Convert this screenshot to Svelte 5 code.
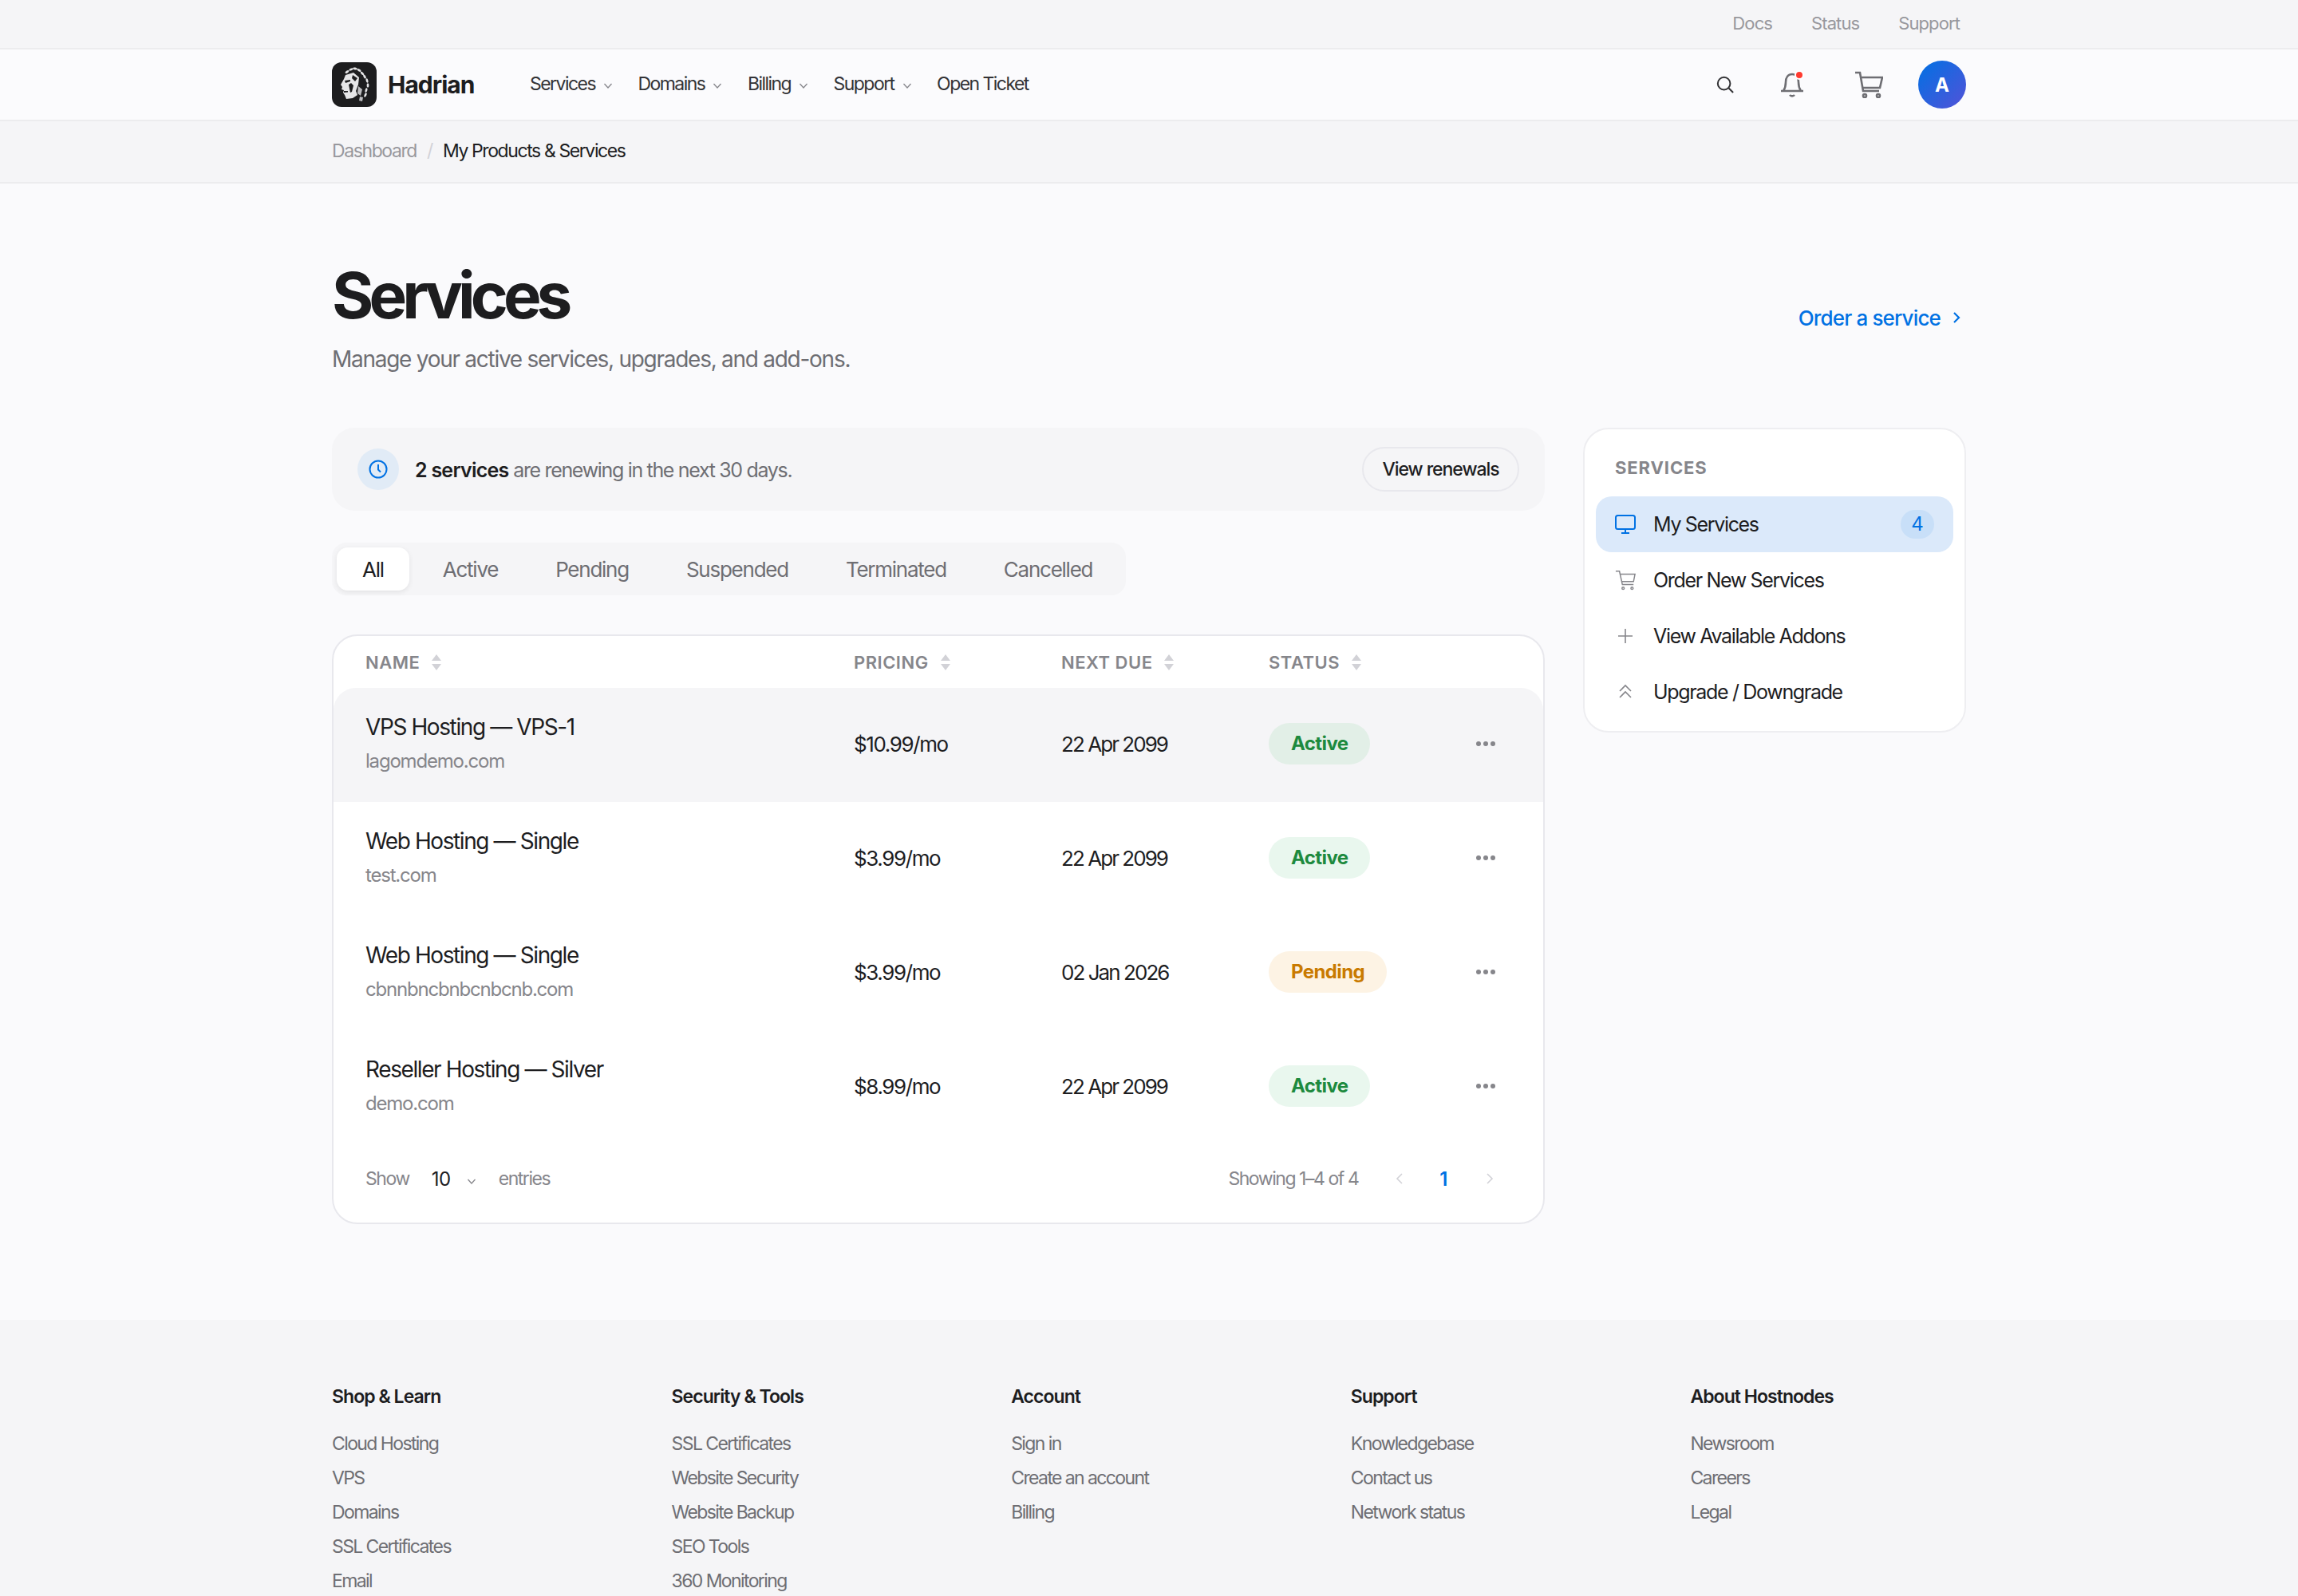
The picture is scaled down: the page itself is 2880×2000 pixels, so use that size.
<script>
	const navItems = [
		{ label: 'Services', caret: true },
		{ label: 'Domains', caret: true },
		{ label: 'Billing', caret: true },
		{ label: 'Support', caret: true },
		{ label: 'Open Ticket', caret: false }
	];
	const tabs = ['All', 'Active', 'Pending', 'Suspended', 'Terminated', 'Cancelled'];
	const columns = ['Name', 'Pricing', 'Next Due', 'Status'];
	const services = [
		{ name: 'VPS Hosting — VPS-1', domain: 'lagomdemo.com', price: '$10.99/mo', due: '22 Apr 2099', status: 'Active' },
		{ name: 'Web Hosting — Single', domain: 'test.com', price: '$3.99/mo', due: '22 Apr 2099', status: 'Active' },
		{ name: 'Web Hosting — Single', domain: 'cbnnbncbnbcnbcnb.com', price: '$3.99/mo', due: '02 Jan 2026', status: 'Pending' },
		{ name: 'Reseller Hosting — Silver', domain: 'demo.com', price: '$8.99/mo', due: '22 Apr 2099', status: 'Active' }
	];
	const footer = [
		{ title: 'Shop & Learn', links: ['Cloud Hosting', 'VPS', 'Domains', 'SSL Certificates', 'Email'] },
		{ title: 'Security & Tools', links: ['SSL Certificates', 'Website Security', 'Website Backup', 'SEO Tools', '360 Monitoring'] },
		{ title: 'Account', links: ['Sign in', 'Create an account', 'Billing'] },
		{ title: 'Support', links: ['Knowledgebase', 'Contact us', 'Network status'] },
		{ title: 'About Hostnodes', links: ['Newsroom', 'Careers', 'Legal'] }
	];
	// laurel wreath leaves on the logo: x, y, angle
	const leaves = [
		[19, 12, -35], [24, 9, -20], [29, 8, 10], [34, 10, 30], [38, 14, 45], [41, 18, 60],
		[44, 23, 75], [45, 29, 90], [43, 35, 105], [42, 41, 115]
	];
</script>

<div class="page">
	<div class="topbar">
		<div class="wrap toplinks">
			<span>Docs</span>
			<span>Status</span>
			<span>Support</span>
		</div>
	</div>

	<header class="navbar">
		<div class="wrap navrow">
			<div class="brand">
				<svg class="logo" viewBox="0 0 56 56">
					<rect width="56" height="56" rx="12" fill="#1d1d1f" />
					<!-- bust in profile, looking left -->
					<path d="M17 16l10-3 7 6-1 9-3 8 2 5-6 4-8 1-2-5-2-3 1-3-3-1 1-3-2-3 4-7z" fill="#e6e6e8" />
					<path d="M16 23l7-1 0 2-6 2zM21 28l3-2 3 3-2 8-2 1zM15 36l5 0 0 1.500-5 .5zM26 16l6 4-3 4-4-4z" fill="#1d1d1f" />
					<path d="M33 30l5 4-2 8-4-3zM35 43l4 1-1 5-4-1z" fill="#bdbdc0" />
					{#each leaves as [x, y, a]}
						<ellipse cx={x} cy={y} rx="2.8" ry="1.4" transform="rotate({a} {x} {y})" fill="#e6e6e8" />
					{/each}
				</svg>
				<span class="brandname">Hadrian</span>
			</div>
			<nav class="mainnav">
				{#each navItems as item}
					<span class="navitem">
						{item.label}
						{#if item.caret}
							<svg class="caret" viewBox="0 0 12 12"><path d="M1.500 4l4.500 5 4.500-5" /></svg>
						{/if}
					</span>
				{/each}
			</nav>
			<div class="navicons">
				<svg class="icon-search" viewBox="0 0 24 24"><circle cx="10.5" cy="10.5" r="8.5" /><path d="M17 17l6 6" /></svg>
				<span class="bell">
					<svg viewBox="0 0 32 34"><path d="M2 25h28M5 25c2-3 3-6 3-11 0-6 3-10 8-10s8 4 8 10c0 5 1 8 3 11M13 30c1.500 1.800 4.500 1.800 6 0" /></svg>
					<i class="dot"></i>
				</span>
				<svg class="icon-cart" viewBox="0 0 36 34">
					<path d="M1 2h6l4 23h20M8 8h27l-3 13H10" />
					<circle cx="13" cy="31" r="2" />
					<circle cx="30" cy="31" r="2" />
				</svg>
				<span class="avatar">A</span>
			</div>
		</div>
	</header>

	<div class="crumbs">
		<div class="wrap crumbrow">
			<span class="muted">Dashboard</span>
			<span class="slash">/</span>
			<span class="current">My Products &amp; Services</span>
		</div>
	</div>

	<main class="wrap">
		<div class="pagehead">
			<div>
				<h1>Services</h1>
				<p>Manage your active services, upgrades, and add-ons.</p>
			</div>
			<span class="order">
				Order a service
				<svg viewBox="0 0 12 16"><path d="M3 2l6 6-6 6" /></svg>
			</span>
		</div>

		<div class="columns">
			<section class="content">
				<div class="notice">
					<span class="clock">
						<svg viewBox="0 0 24 24"><circle cx="12" cy="12" r="10.5" /><path d="M12 6v6.500l3 3" /></svg>
					</span>
					<span class="noticetext"><strong>2 services</strong> are renewing in the next 30 days.</span>
					<span class="renew">View renewals</span>
				</div>

				<div class="tabs">
					{#each tabs as tab, i}
						<span class="tab" class:selected={i === 0}>{tab}</span>
					{/each}
				</div>

				<div class="tablecard">
					<div class="row head">
						{#each columns as col}
							<span class="th">
								{col}
								<svg viewBox="0 0 12 20"><path d="M6 0l6 8H0zM6 20l-6-8h12z" /></svg>
							</span>
						{/each}
					</div>
					{#each services as s, i}
						<div class="row item" class:hover={i === 0}>
							<div class="namecell">
								<span class="sname">{s.name}</span>
								<span class="sdomain">{s.domain}</span>
							</div>
							<span class="price">{s.price}</span>
							<span class="due">{s.due}</span>
							<span><span class="badge {s.status.toLowerCase()}">{s.status}</span></span>
							<span class="more"><i></i><i></i><i></i></span>
						</div>
					{/each}
					<div class="tablefoot">
						<div class="show">
							<span>Show</span>
							<span class="num">10</span>
							<svg class="caret" viewBox="0 0 12 12"><path d="M1.500 4l4.500 5 4.500-5" /></svg>
							<span class="entries">entries</span>
						</div>
						<div class="pager">
							<span class="showing">Showing 1–4 of 4</span>
							<svg class="arrow" viewBox="0 0 10 16"><path d="M8 2L2 8l6 6" /></svg>
							<span class="page1">1</span>
							<svg class="arrow" viewBox="0 0 10 16"><path d="M2 2l6 6-6 6" /></svg>
						</div>
					</div>
				</div>
			</section>

			<aside class="sidebar">
				<h4>SERVICES</h4>
				<div class="sideitem active">
					<svg class="blue" viewBox="0 0 26 24"><rect x="1" y="1" width="24" height="17" rx="2.5" /><path d="M13 18v4M8 23h10" /></svg>
					<span>My Services</span>
					<b>4</b>
				</div>
				<div class="sideitem">
					<svg viewBox="0 0 28 28"><path d="M1 2h5l4 18h15M7 6h20l-2 10H9" /><circle cx="11" cy="25" r="1.5" /><circle cx="23" cy="25" r="1.5" /></svg>
					<span>Order New Services</span>
				</div>
				<div class="sideitem">
					<svg viewBox="0 0 26 26"><path d="M13 4v18M4 13h18" /></svg>
					<span>View Available Addons</span>
				</div>
				<div class="sideitem">
					<svg viewBox="0 0 26 26"><path d="M6 12l7-7 7 7M6 20l7-7 7 7" /></svg>
					<span>Upgrade / Downgrade</span>
				</div>
			</aside>
		</div>
	</main>

	<footer class="sitefoot">
		<div class="wrap footgrid">
			{#each footer as col}
				<div class="footcol">
					<h5>{col.title}</h5>
					{#each col.links as link}
						<span>{link}</span>
					{/each}
				</div>
			{/each}
		</div>
	</footer>
</div>

<style>
	:global(body) {
		margin: 0;
		background: #fafafc;
		font-family: Inter, 'Liberation Sans', sans-serif;
		color: #1d1d1f;
	}
	svg {
		fill: none;
		stroke: currentColor;
		flex: none;
		display: block;
	}
	h1,
	h4,
	h5,
	p {
		margin: 0;
	}
	.page {
		height: 2000px;
		overflow: hidden;
	}
	.wrap {
		width: 2048px;
		margin: 0 auto;
	}

	.topbar {
		height: 60px;
		background: #f5f5f7;
		border-bottom: 2px solid #ececee;
	}
	.toplinks {
		height: 100%;
		display: flex;
		justify-content: flex-end;
		align-items: center;
		gap: 49px;
		padding: 0 8px 3px 0;
		box-sizing: border-box;
		font-size: 22px;
		letter-spacing: -0.9px;
		color: #98989d;
	}

	.navbar {
		height: 88px;
		background: #fbfbfd;
		border-bottom: 2px solid #ececee;
	}
	.navrow {
		height: 100%;
		display: flex;
		align-items: center;
	}
	.brand {
		display: flex;
		align-items: center;
		gap: 14px;
		width: 248px;
	}
	.logo {
		width: 56px;
		height: 56px;
		stroke: none;
	}
	.brandname {
		font-size: 30px;
		font-weight: 700;
		letter-spacing: -1px;
	}
	.mainnav {
		display: flex;
		gap: 31.5px;
		font-size: 23px;
		letter-spacing: -1.55px;
		color: #333336;
		padding-bottom: 3px;
	}
	.navitem {
		display: flex;
		align-items: center;
		gap: 10px;
	}
	.caret {
		width: 12px;
		height: 12px;
		stroke: #86868b;
		stroke-width: 1.3;
		margin-top: 5px;
	}
	.navicons {
		margin-left: auto;
		display: flex;
		align-items: center;
	}
	.icon-search {
		width: 22px;
		height: 22px;
		stroke: #333336;
		stroke-width: 2.2;
		margin-right: 57px;
	}
	.bell {
		position: relative;
		width: 32px;
		height: 34px;
		margin-right: 62px;
		color: #6e6e73;
	}
	.bell svg {
		stroke-width: 2.6;
	}
	.dot {
		position: absolute;
		top: -1px;
		right: 1px;
		width: 8px;
		height: 8px;
		border-radius: 50%;
		background: #ff3b30;
		border: 2px solid #fff;
	}
	.icon-cart {
		width: 36px;
		height: 34px;
		stroke: #6e6e73;
		stroke-width: 2.6;
		margin-right: 44px;
	}
	.avatar {
		width: 60px;
		height: 60px;
		border-radius: 50%;
		background: linear-gradient(135deg, #0071e3, #5352d8);
		color: #fff;
		font-size: 24px;
		font-weight: 700;
		display: flex;
		align-items: center;
		justify-content: center;
	}

	.crumbs {
		height: 76px;
		background: #f5f5f7;
		border-bottom: 2px solid #ececee;
	}
	.crumbrow {
		height: 100%;
		display: flex;
		align-items: center;
		gap: 13px;
		font-size: 23px;
		letter-spacing: -1.4px;
		padding-bottom: 2px;
		box-sizing: border-box;
	}
	.muted {
		color: #98989d;
	}
	.slash {
		color: #d2d2d7;
	}

	.pagehead {
		display: flex;
		justify-content: space-between;
		align-items: center;
		padding: 94px 0 66px;
		height: 306px;
		box-sizing: border-box;
	}
	h1 {
		font-size: 80px;
		font-weight: 700;
		letter-spacing: -5.95px;
		line-height: 92px;
	}
	.pagehead p {
		margin-top: 14px;
		font-size: 28px;
		letter-spacing: -1.27px;
		line-height: 40px;
		color: #6e6e73;
	}
	.order {
		display: flex;
		align-items: center;
		gap: 14px;
		color: #0071e3;
		font-size: 26px;
		font-weight: 500;
		letter-spacing: -0.85px;
		margin: 2px 6px 0 0;
	}
	.order svg {
		width: 12px;
		height: 16px;
		stroke-width: 2.2;
	}

	.columns {
		display: flex;
		gap: 48px;
		align-items: flex-start;
	}
	.content {
		width: 1520px;
	}
	.notice {
		height: 104px;
		border-radius: 28px;
		background: #f5f5f7;
		display: flex;
		align-items: center;
		padding: 0 32px;
		box-sizing: border-box;
	}
	.clock {
		width: 52px;
		height: 52px;
		border-radius: 50%;
		background: #e1ebf6;
		display: flex;
		align-items: center;
		justify-content: center;
		color: #0071e3;
	}
	.clock svg {
		width: 24px;
		height: 24px;
		stroke-width: 2;
	}
	.noticetext {
		margin: 2px 0 0 20px;
		font-size: 25px;
		letter-spacing: -1.33px;
		color: #6e6e73;
	}
	.noticetext strong {
		color: #1d1d1f;
		font-weight: 600;
		letter-spacing: -0.75px;
	}
	.renew {
		margin-left: auto;
		width: 197px;
		height: 56px;
		justify-content: center;
		border: 2px solid #e8e8ed;
		border-radius: 28px;
		display: flex;
		align-items: center;
		box-sizing: border-box;
		font-size: 23px;
		font-weight: 500;
		letter-spacing: -1.05px;
	}

	.tabs {
		display: inline-flex;
		margin-top: 40px;
		height: 66px;
		background: #f5f5f7;
		border-radius: 18px;
		padding: 6px;
		box-sizing: border-box;
	}
	.tab {
		display: flex;
		align-items: center;
		padding: 0 36px;
		font-size: 26px;
		letter-spacing: -1.25px;
		color: #6e6e73;
	}
	.tab.selected {
		background: #fff;
		border-radius: 14px;
		color: #1d1d1f;
		box-shadow: 0 2px 6px rgba(0, 0, 0, 0.08);
		padding: 0 32px;
		margin-right: 6px;
	}

	.tablecard {
		margin-top: 49px;
		background: #fff;
		border: 2px solid #e8e8ed;
		border-radius: 32px;
		overflow: hidden;
	}
	.row {
		display: grid;
		grid-template-columns: 612px 260px 260px 1fr 84px;
		padding-left: 40px;
		align-items: center;
	}
	.head {
		height: 65px;
		grid-template-columns: 612px 260px 260px 1fr;
	}
	.th {
		display: flex;
		align-items: center;
		gap: 15px;
		text-transform: uppercase;
		font-size: 22px;
		font-weight: 600;
		letter-spacing: 0.5px;
		color: #86868b;
	}
	.th svg {
		width: 12px;
		height: 20px;
		stroke: none;
		fill: #d2d2d7;
	}
	.item {
		height: 143px;
		padding-bottom: 3px;
		box-sizing: border-box;
		font-size: 26px;
	}
	.item.hover {
		background: #f5f5f7;
		border-radius: 28px 28px 0 0;
	}
	.namecell {
		display: flex;
		flex-direction: column;
		gap: 8px;
	}
	.sname {
		font-size: 28px;
		letter-spacing: -1.4px;
		line-height: 36px;
	}
	.sdomain {
		font-size: 24px;
		letter-spacing: -1.2px;
		line-height: 34px;
		color: #86868b;
	}
	.price {
		letter-spacing: -1.4px;
	}
	.due {
		letter-spacing: -1.95px;
	}
	.badge {
		display: inline-flex;
		align-items: center;
		height: 52px;
		padding: 0 28px 2px;
		box-sizing: border-box;
		border-radius: 26px;
		font-size: 24px;
		font-weight: 700;
		letter-spacing: -0.6px;
	}
	.badge.active {
		background: #e9f7ee;
		color: #1d8a3e;
	}
	.item.hover .badge.active {
		background: #e2efe7;
	}
	.badge.pending {
		background: #fdf3e4;
		color: #c97a00;
	}
	.more {
		display: flex;
		gap: 3px;
	}
	.more i {
		width: 6px;
		height: 6px;
		border-radius: 50%;
		background: #86868b;
	}

	.tablefoot {
		height: 98px;
		display: flex;
		justify-content: space-between;
		align-items: center;
		padding: 0 62px 12px 40px;
		box-sizing: border-box;
		font-size: 23px;
		letter-spacing: -1.45px;
		color: #86868b;
	}
	.show,
	.pager {
		display: flex;
		align-items: center;
	}
	.num {
		margin-left: 28px;
		color: #1d1d1f;
		font-size: 24px;
		letter-spacing: -0.5px;
	}
	.show .caret {
		margin-left: 20px;
	}
	.entries {
		margin-left: 28px;
	}
	.arrow {
		width: 10px;
		height: 16px;
		stroke: #d2d2d7;
		stroke-width: 1.6;
	}
	.showing {
		margin-right: 47px;
	}
	.page1 {
		margin: 0 49px 0 45px;
		color: #0071e3;
		font-size: 24px;
		font-weight: 600;
	}

	.sidebar {
		width: 480px;
		height: 382px;
		box-sizing: border-box;
		background: #fff;
		border: 2px solid #eeeef1;
		border-radius: 32px;
		padding: 14px;
	}
	h4 {
		font-size: 22px;
		font-weight: 700;
		letter-spacing: 0.9px;
		color: #86868b;
		margin: 21px 0 0 24px;
		height: 49px;
	}
	.sideitem {
		height: 70px;
		display: flex;
		align-items: center;
		gap: 22px;
		padding: 0 24px;
		border-radius: 20px;
		font-size: 25px;
		letter-spacing: -1.33px;
		color: #1d1d1f;
	}
	.sideitem svg {
		width: 26px;
		height: 26px;
		stroke: #86868b;
		stroke-width: 1.6;
	}
	.sideitem svg.blue {
		stroke: #0071e3;
		stroke-width: 2;
	}
	.sideitem.active {
		background: #dbe9fa;
	}
	.sideitem b {
		margin-left: auto;
		width: 42px;
		height: 36px;
		border-radius: 18px;
		background: #c8dff8;
		color: #0071e3;
		font-size: 24px;
		font-weight: 400;
		letter-spacing: 0;
		display: flex;
		align-items: center;
		justify-content: center;
		padding-bottom: 2px;
		box-sizing: border-box;
	}

	.sitefoot {
		margin-top: 120px;
		background: #f5f5f7;
		height: 346px;
		padding-top: 79px;
		box-sizing: border-box;
	}
	.footgrid {
		display: grid;
		grid-template-columns: repeat(5, 1fr);
		gap: 80px;
	}
	.footcol {
		display: flex;
		flex-direction: column;
		font-size: 23px;
		letter-spacing: -1.6px;
		color: #6e6e73;
		line-height: 43px;
	}
	h5 {
		font-size: 23px;
		font-weight: 600;
		letter-spacing: -0.95px;
		color: #1d1d1f;
		margin-bottom: 21px;
		line-height: 34px;
	}
</style>
